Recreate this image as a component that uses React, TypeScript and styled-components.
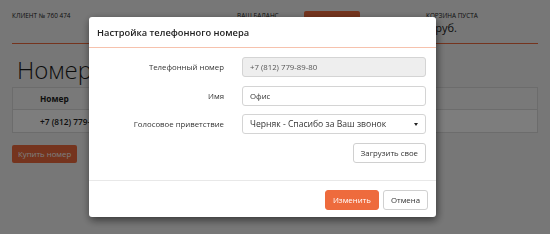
import React from "react";
import styled, { createGlobalStyle } from "styled-components";

const ORANGE = "#ee6b3d";

const GlobalStyle = createGlobalStyle`
  * { box-sizing: border-box; }
  html, body {
    margin: 0;
    padding: 0;
    background: #f2f2f2;
    font-family: "Open Sans", "Noto Sans", sans-serif;
    color: #333;
  }
`;

const Page = styled.div`
  width: 550px;
  height: 234px;
  padding: 0 12px;
  position: relative;
  overflow: hidden;
`;

const TopBar = styled.header`
  display: grid;
  grid-template-columns: 225px 67px 122px 1fr;
  align-items: start;
  height: 44px;
  padding-top: 11px;
  border-bottom: 1px solid ${ORANGE};
`;

const SmallCaps = styled.div`
  font-size: 6.4px;
  line-height: 8px;
  text-transform: uppercase;
  color: #1a1a1a;
  padding-top: 1px;
`;

const BalanceButton = styled.div`
  width: 56px;
  height: 12px;
  border-radius: 2px;
  background: ${ORANGE};
`;

const Cart = styled.div`
  display: flex;
  flex-direction: column;
`;

const CartSum = styled.div`
  font-size: 11px;
  line-height: 14px;
  color: #1a1a1a;
  margin-top: 1px;
`;

const Title = styled.h1`
  margin: 10px 0 0 5px;
  font-size: 24px;
  font-weight: 300;
  line-height: 32px;
  color: #1a1a1a;
`;

const Table = styled.div`
  border: 1px solid #ddd;
  margin-top: 1px;
`;

const TableRow = styled.div<{ $head?: boolean }>`
  height: ${(p) => (p.$head ? 21 : 23)}px;
  display: flex;
  align-items: center;
  padding-left: 27px;
  font-size: 8.3px;
  font-weight: ${(p) => (p.$head ? 700 : 600)};
  background: ${(p) => (p.$head ? "#f7f7f7" : "#fff")};
  border-top: ${(p) => (p.$head ? "none" : "1px solid #ddd")};
  color: #222;
`;

const BuyButton = styled.div`
  display: inline-flex;
  align-items: center;
  margin-top: 12px;
  height: 18px;
  padding: 0 6px;
  border-radius: 2px;
  background: ${ORANGE};
  color: #fff;
  font-size: 7.8px;
`;

const Backdrop = styled.div`
  position: fixed;
  inset: 0;
  background: rgba(0, 0, 0, 0.51);
`;

const Modal = styled.div`
  position: absolute;
  left: 89px;
  top: 17px;
  width: 347px;
  height: 200px;
  background: #fff;
  border-radius: 3px;
  box-shadow: 1px 3px 8px rgba(0, 0, 0, 0.55);
  display: flex;
  flex-direction: column;
`;

const ModalHeader = styled.div`
  height: 31px;
  display: flex;
  align-items: center;
  padding-left: 8px;
  border-bottom: 1px solid #f6c2ad;
  font-size: 9.3px;
  font-weight: 600;
  color: #222;
`;

const ModalBody = styled.div`
  display: grid;
  grid-template-columns: 126px 1fr;
  column-gap: 18px;
  row-gap: 8.5px;
  padding: 9px 10px 17px 9px;
  border-bottom: 1px solid #e8e8e8;
`;

const Label = styled.label`
  display: flex;
  align-items: center;
  justify-content: flex-end;
  font-size: 7.8px;
  color: #333;
`;

const Field = styled.div<{ $disabled?: boolean; $wide?: boolean }>`
  height: 20px;
  display: flex;
  align-items: center;
  justify-content: space-between;
  padding: 0 7px;
  border: 1px solid #d4d4d4;
  border-radius: 3px;
  background: ${(p) => (p.$disabled ? "#eeeeee" : "#fff")};
  font-size: ${(p) => (p.$wide ? 8.6 : 7.8)}px;
  color: ${(p) => (p.$disabled ? "#555" : "#333")};
`;

const Caret = styled.span`
  width: 0;
  height: 0;
  border-left: 2.5px solid transparent;
  border-right: 2.5px solid transparent;
  border-top: 3px solid #222;
`;

const Button = styled.button<{ $primary?: boolean }>`
  height: 20px;
  padding: 0 7px;
  border-radius: 3px;
  font-family: inherit;
  font-size: 7.8px;
  cursor: pointer;
  border: 1px solid ${(p) => (p.$primary ? ORANGE : "#d0d0d0")};
  background: ${(p) => (p.$primary ? ORANGE : "#fff")};
  color: ${(p) => (p.$primary ? "#fff" : "#333")};
`;

const UploadCell = styled.div`
  grid-column: 2;
  display: flex;
  justify-content: flex-end;
`;

const ModalFooter = styled.div`
  display: flex;
  justify-content: flex-end;
  gap: 4px;
  padding: 9px 8px 0 0;
`;

export default function App() {
  return (
    <>
      <GlobalStyle />
      <Page>
        <TopBar>
          <SmallCaps>Клиент № 760 474</SmallCaps>
          <SmallCaps>Ваш баланс</SmallCaps>
          <BalanceButton />
          <Cart>
            <SmallCaps>Корзина пуста</SmallCaps>
            <CartSum>0 руб.</CartSum>
          </Cart>
        </TopBar>
        <Title>Номера</Title>
        <Table>
          <TableRow $head>Номер</TableRow>
          <TableRow>+7 (812) 779-89-80</TableRow>
        </Table>
        <BuyButton>Купить номер</BuyButton>
      </Page>
      <Backdrop>
        <Modal>
          <ModalHeader>Настройка телефонного номера</ModalHeader>
          <ModalBody>
            <Label>Телефонный номер</Label>
            <Field $disabled>+7 (812) 779-89-80</Field>
            <Label>Имя</Label>
            <Field>Офис</Field>
            <Label>Голосовое приветствие</Label>
            <Field $wide>
              Черняк - Спасибо за Ваш звонок
              <Caret />
            </Field>
            <UploadCell>
              <Button>Загрузить свое</Button>
            </UploadCell>
          </ModalBody>
          <ModalFooter>
            <Button $primary>Изменить</Button>
            <Button>Отмена</Button>
          </ModalFooter>
        </Modal>
      </Backdrop>
    </>
  );
}
